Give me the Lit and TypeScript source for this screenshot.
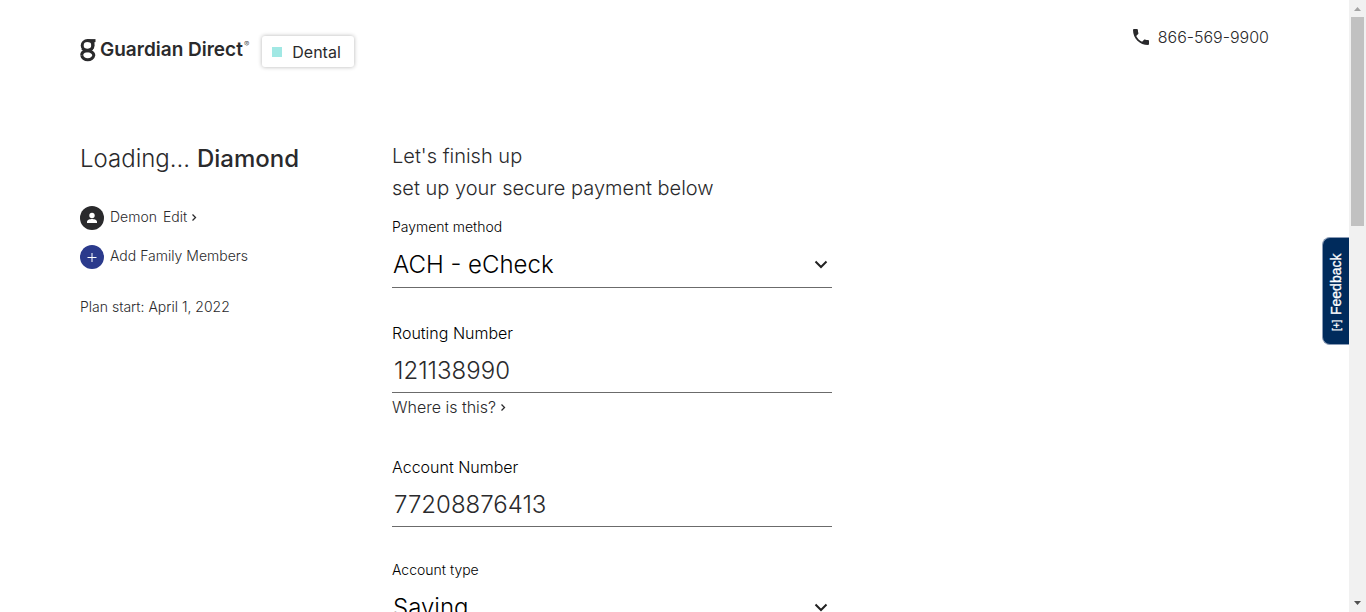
import { LitElement, html, css, svg } from "lit";
import { customElement } from "lit/decorators.js";

const chevronRight = html`<svg class="chev" viewBox="0 0 6 8" width="6" height="8" aria-hidden="true">
  <path d="M1.5 1.500 L4.5 4.500 L1.5 7.500" fill="none" stroke="currentColor" stroke-width="1.3" />
</svg>`;

const chevronDown = html`<svg class="caret" viewBox="0 0 14 9" width="14" height="9" aria-hidden="true">
  <path d="M1.5 1.5 L7 7 L12.5 1.5" fill="none" stroke="#222" stroke-width="2" />
</svg>`;

const logoMark = svg`
  <g fill="none" stroke="#2a2a2c" stroke-width="3">
    <path d="M15.500 1.600 H7.500" />
    <ellipse cx="7.500" cy="6.400" rx="5.300" ry="4.800" />
    <path d="M13 1.600 V6.500 C13 10.500 10 11.600 6 12 C3 12.400 1.700 13.800 1.700 16.200" />
    <path d="M2.500 9.500 C4.500 12.300 8 11.300 10.500 12.300 C12.600 13.200 13.800 14.500 13.800 16.300 A6.100 5 0 0 1 1.700 16.300" />
  </g>`;

@customElement("app-root")
export class AppRoot extends LitElement {
  static styles = css`
    :host {
      display: block;
      font-family: Inter, "Liberation Sans", sans-serif;
      font-weight: 300;
      color: #2a2a2c;
    }
    * { box-sizing: border-box; }
    a { color: inherit; text-decoration: none; }
    .window {
      position: relative;
      display: flex;
      height: 100vh;
      overflow: hidden;
      background: #fff;
    }
    .page { flex: 1; min-width: 0; padding: 0 80px; }
    header {
      display: flex;
      align-items: flex-start;
      justify-content: space-between;
      height: 140px;
    }
    .brand { display: flex; align-items: flex-start; gap: 13px; padding-top: 36px; }
    .logo { display: flex; align-items: center; gap: 4px; padding-top: 2px; }
    .word { font-size: 19px; font-weight: 600; line-height: 24px; }
    .reg { align-self: flex-start; font-size: 8px; line-height: 12px; margin-left: -3px; }
    .product {
      display: flex;
      align-items: center;
      gap: 10px;
      height: 31px;
      padding: 0 13px 0 10px;
      border-radius: 3px;
      box-shadow: 0 0 4px rgba(0, 0, 0, 0.3);
      font-size: 16px;
      font-weight: 400;
    }
    .swatch { width: 10px; height: 10px; background: #a1e8e4; }
    .phone {
      display: flex;
      align-items: center;
      gap: 9px;
      padding-top: 25px;
      font-size: 16px;
      line-height: 24px;
    }
    .columns { display: grid; grid-template-columns: 312px minmax(0, 440px); }
    h1 { margin: 0 0 28px; font-size: 24px; line-height: 38px; font-weight: 300; }
    h1 b { font-weight: 500; }
    .row {
      display: flex;
      align-items: center;
      gap: 6px;
      height: 24px;
      margin-bottom: 15px;
      font-size: 14px;
      line-height: 22px;
    }
    .add { padding: 0; border: 0; background: none; color: inherit; font: inherit; }
    .arrow { display: inline-flex; align-items: center; gap: 4px; }
    .row .label { padding-bottom: 2px; }
    .plan { margin: 28px 0 0; font-size: 14px; line-height: 20px; }
    h2 { margin: 0 0 13px; font-size: 20px; line-height: 32px; font-weight: 300; }
    .field { display: flex; flex-direction: column; margin-bottom: 33px; }
    label { font-size: 16px; line-height: 24px; color: #000; }
    .small { font-size: 14px; line-height: 20px; }
    .control { position: relative; }
    input, select {
      display: block;
      width: 100%;
      height: 48px;
      margin: 0;
      padding: 4px 2px 0;
      border: 0;
      border-bottom: 1px solid #6b6b6b;
      border-radius: 0;
      outline: 0;
      background: transparent;
      color: #2a2a2c;
      font: inherit;
      font-size: 24px;
      appearance: none;
    }
    select { height: 51px; padding: 4px 1px 0; color: #000; }
    .caret { position: absolute; right: 4px; top: 23px; pointer-events: none; }
    .where { align-self: flex-start; margin: 2px 0 3px; font-size: 16px; line-height: 24px; }
    .feedback {
      position: absolute;
      right: 17px;
      top: 237px;
      display: flex;
      align-items: center;
      gap: 5px;
      width: 27px;
      height: 108px;
      padding: 13px 0;
      border: 1px solid #8a9bb5;
      border-left: 0;
      border-radius: 0 8px 8px 0;
      background: #002b5c;
      color: #fff;
      font: 400 14px "Liberation Sans", sans-serif;
      -webkit-text-stroke: 0.3px #fff;
      writing-mode: vertical-rl;
      transform: rotate(180deg);
    }
    .plus { font-size: 10px; }
    .scroll {
      display: flex;
      flex-direction: column;
      align-items: center;
      justify-content: space-between;
      width: 17px;
      background: #f1f1f1;
    }
    .bar { display: flex; flex-direction: column; align-items: center; width: 100%; }
    .thumb { width: 13px; height: 209px; background: #c1c1c1; }
    svg { display: block; flex: none; }
  `;

  render() {
    return html`
      <div class="window">
        <div class="page">
          <header>
            <div class="brand">
              <a class="logo" href="#">
                <svg viewBox="0 0 16 23" width="16" height="23" aria-hidden="true">${logoMark}</svg>
                <span class="word">Guardian Direct</span><span class="reg">®</span>
              </a>
              <div class="product"><span class="swatch"></span>Dental</div>
            </div>
            <a class="phone" href="tel:8665699900">
              <svg viewBox="3 3 18 18" width="16" height="16" aria-hidden="true">
                <path fill="#2a2a2c" d="M6.62 10.79c1.44 2.83 3.76 5.14 6.59 6.59l2.2-2.2c.27-.27.67-.36 1.02-.24 1.12.37 2.33.57 3.57.57.55 0 1 .45 1 1V20c0 .55-.45 1-1 1-9.39 0-17-7.61-17-17 0-.55.45-1 1-1h3.5c.55 0 1 .45 1 1 0 1.25.2 2.45.57 3.57.11.35.03.74-.25 1.02l-2.2 2.2z" />
              </svg>
              866-569-9900
            </a>
          </header>
          <div class="columns">
            <aside>
              <h1>Loading... <b>Diamond</b></h1>
              <div class="row">
                <svg viewBox="0 0 24 24" width="24" height="24" aria-hidden="true">
                  <circle cx="12" cy="12" r="12" fill="#2a2a2c" />
                  <circle cx="12" cy="9.5" r="2.7" fill="#fff" />
                  <path d="M7 17v-1.400c0-1.700 3.300-2.500 5-2.500s5 .8 5 2.500V17z" fill="#fff" />
                </svg>
                <span class="label">Demon</span>
                <a class="arrow label" href="#">Edit ${chevronRight}</a>
              </div>
              <div class="row">
                <svg viewBox="0 0 24 24" width="24" height="24" aria-hidden="true">
                  <circle cx="12" cy="12" r="12" fill="#2b3a8c" />
                  <path d="M12 8v9M7.500 12.500h9" stroke="#fff" stroke-width="1" />
                </svg>
                <button class="add label">Add Family Members</button>
              </div>
              <p class="plan">Plan start: April 1, 2022</p>
            </aside>
            <main>
              <h2>Let's finish up<br />set up your secure payment below</h2>
              <div class="field">
                <label class="small" for="method">Payment method</label>
                <div class="control">
                  <select id="method"><option>ACH - eCheck</option></select>${chevronDown}
                </div>
              </div>
              <div class="field">
                <label for="routing">Routing Number</label>
                <input id="routing" type="text" value="121138990" />
                <a class="where arrow" href="#">Where is this? ${chevronRight}</a>
              </div>
              <div class="field">
                <label for="account">Account Number</label>
                <input id="account" type="text" value="77208876413" />
              </div>
              <div class="field">
                <label class="small" for="type">Account type</label>
                <div class="control">
                  <select id="type"><option>Saving</option></select>${chevronDown}
                </div>
              </div>
            </main>
          </div>
        </div>
        <button class="feedback"><span class="plus">[+]</span>Feedback</button>
        <div class="scroll" aria-hidden="true">
          <div class="bar">
            <svg viewBox="0 0 17 17" width="17" height="17"><path d="M5 11 L8.500 7 L12 11z" fill="#a3a3a3" /></svg>
            <div class="thumb"></div>
          </div>
          <svg viewBox="0 0 17 17" width="17" height="17"><path d="M5 6 L8.500 10 L12 6z" fill="#505050" /></svg>
        </div>
      </div>
    `;
  }
}
